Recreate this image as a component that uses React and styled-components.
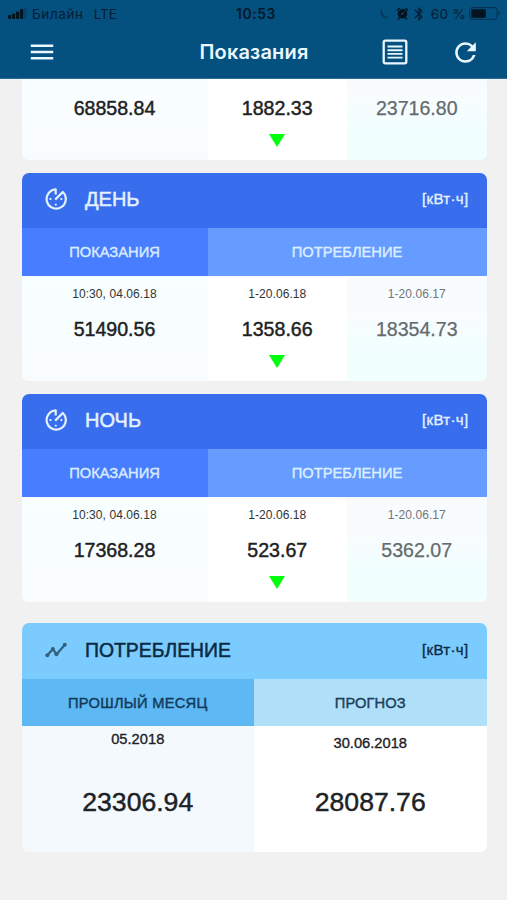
import styled, { createGlobalStyle } from "styled-components";
import { MdMenu, MdRefresh, MdBluetooth } from "react-icons/md";

const GlobalStyle = createGlobalStyle`
    * {
        box-sizing: border-box;
    }

    body {
        margin: 0;
        background-color: #f1f1f1;
        font-family: "Liberation Sans", Arial, sans-serif;
    }
`

const Screen = styled.div`
    height: 900px;
    display: grid;
    grid-template-rows: 79px 1fr;
    overflow: hidden;
    background-color: #f1f1f1;
`

const Header = styled.header`
    display: grid;
    grid-template-rows: 27px 50px;
    background-color: #04507f;
    border-bottom: 1px solid #2c6c94;
    font-family: Inter, sans-serif;
`

const StatusBar = styled.div`
    display: grid;
    grid-template-columns: 1fr auto 1fr;
    align-items: center;
    padding: 0 6px 0 8px;
    color: #061d33;
    font-size: 13.5px;
`

const StatusGroup = styled.div`
    display: flex;
    align-items: center;
    justify-content: ${props => props.$end ? "flex-end" : "flex-start"};

    svg {
        display: block;
        flex: none;
    }
`

const StatusText = styled.span`
    margin-left: ${props => props.$gap || 0}px;
    letter-spacing: ${props => props.$spacing || 0}px;
    white-space: nowrap;
`

const Clock = styled.span`
    padding-left: 3px;
    color: #041829;
    font-size: 13.8px;
    font-weight: 600;
    letter-spacing: 0.6px;
`

const NavBar = styled.div`
    display: grid;
    grid-template-columns: 84px 1fr 57px 84px;
    align-items: center;
    color: #e9f7ff;
`

const IconButton = styled.button`
    display: grid;
    place-content: center;
    padding: 0;
    border: none;
    background: none;
    color: inherit;

    svg {
        display: block;
    }
`

const Title = styled.h1`
    margin: 0;
    padding-left: 58px;
    text-align: center;
    font-size: 20px;
    font-weight: 600;
    letter-spacing: 0.15px;
`

const Content = styled.main`
    overflow: hidden;
    padding: 0 20.5px 0 21.5px;
`

const Card = styled.section`
    margin-top: ${props => props.$top}px;
    border-radius: 7px;
    overflow: hidden;
    background-color: white;
`

const CardHead = styled.div`
    display: grid;
    grid-template-columns: 63.5px 1fr auto;
    align-items: center;
    height: ${props => props.$light ? 56 : 55}px;
    padding: 0 18px 3px 0;
    color: ${props => props.$light ? "#0b2a42" : "#e4f1ff"};
    background-color: ${props => props.$light ? "#7bcbff" : "#386eee"};

    svg {
        display: block;
        margin-left: 22px;
    }
`

const CardTitle = styled.h2`
    margin: 0;
    padding-top: 1px;
    font-size: ${props => props.$size || 20}px;
    font-weight: 400;
    -webkit-text-stroke: 0.5px currentColor;
`

const Unit = styled.span`
    padding-bottom: 1px;
    font-size: 15px;
    letter-spacing: 0.35px;
    -webkit-text-stroke: 0.35px currentColor;
`

const Tabs = styled.div`
    display: grid;
    grid-template-columns: ${props => props.$columns};
    height: ${props => props.$height || 48}px;
`

const Tab = styled.div`
    display: grid;
    place-content: center;
    font-size: 14.7px;
    letter-spacing: ${props => props.$spacing || 0}px;
    color: ${props => props.color};
    background-color: ${props => props.$bg};
    -webkit-text-stroke: 0.4px currentColor;
`

const Body = styled.div`
    display: grid;
    grid-template-columns: 40% 30% 30%;
    height: 105px;
`

const Cell = styled.div`
    display: grid;
    grid-template-rows: 36px 35px 28px;
    align-items: center;
    justify-items: center;
    color: ${props => props.$muted ? "#666a6b" : "#1e2223"};
    background: ${props => props.$bg};
`

const DateText = styled.span`
    font-size: 12px;
    letter-spacing: 0.08px;
    opacity: 0.92;
`

const Value = styled.span`
    font-size: 19.6px;
    -webkit-text-stroke: ${props => props.$muted ? 0.25 : 0.45}px currentColor;
`

const Arrow = styled.i`
    width: 0;
    height: 0;
    border: 8px solid transparent;
    border-top: 13px solid #00ff0c;
    border-bottom: none;
`

const WideBody = styled.div`
    display: grid;
    grid-template-columns: 1fr 1fr;
    height: 126px;
`

const WideCell = styled.div`
    display: flex;
    flex-direction: column;
    align-items: center;
    padding-top: ${props => props.$top}px;
    color: #1d2226;
    background-color: ${props => props.$bg};
`

const Period = styled.span`
    height: ${props => props.$space}px;
    font-size: 14.7px;
    line-height: 18px;
    -webkit-text-stroke: 0.35px currentColor;
`

const Total = styled.span`
    font-size: 26.6px;
    line-height: 30px;
    -webkit-text-stroke: 0.45px currentColor;
`

function SignalIcon() {
    return (
        <svg width="19" height="12" viewBox="0 0 19 12" fill="#03131f">
            <rect x="0" y="7" width="3.2" height="4" rx="1" />
            <rect x="4" y="5.5" width="3.2" height="5.5" rx="1" />
            <rect x="8" y="3.5" width="3.2" height="7.5" rx="1" />
            <rect x="12" y="1" width="3.2" height="10" rx="1" />
            <rect x="16" y="0" width="2.6" height="11" rx="1" opacity="0.2" />
        </svg>
    )
}

function MoonIcon() {
    return (
        <svg width="11" height="12" viewBox="0 0 11 12">
            <path d="M2.5 1.5C.5 5 2 10.5 9.5 9.5C5 9 2.5 6 2.5 1.5Z" fill="#04253f" stroke="#04253f" strokeWidth=".6" opacity=".55" />
        </svg>
    )
}

function AlarmIcon() {
    return (
        <svg width="13" height="13" viewBox="0 0 13 13">
            <circle cx="6.5" cy="6.8" r="4.8" fill="#03131f" />
            <path d="M1.5 3L3.2 1.5M11.5 3L9.8 1.5M3.2 11L2.5 12M9.8 11L10.5 12" stroke="#03131f" strokeWidth="1.4" strokeLinecap="round" />
            <path d="M7.8 5.2L6.5 7H5" fill="none" stroke="#2b6a92" strokeWidth=".8" />
        </svg>
    )
}

function BatteryIcon() {
    return (
        <svg width="32" height="13" viewBox="0 0 32 13">
            <rect x=".6" y=".6" width="27.5" height="11.8" rx="2.8" fill="none" stroke="#04253f" strokeWidth="1" opacity=".75" />
            <rect x="2.3" y="2.2" width="14.5" height="8.6" rx="1" fill="#03131f" />
            <path d="M29.5 4.3C31.3 5 31.3 8 29.5 8.7Z" fill="#04253f" opacity=".75" />
        </svg>
    )
}

function ListIcon() {
    return (
        <svg width="26" height="26" viewBox="0 0 26 26" fill="none" stroke="currentColor">
            <rect x="1.7" y="1.7" width="22.6" height="22.6" rx="1.5" strokeWidth="2.3" />
            <path d="M5.5 7.5H20.5M5.5 11.2H20.5M5.5 14.9H20.5M5.5 18.6H20.5" strokeWidth="1.9" />
        </svg>
    )
}

// tariff meter: open dial with a hand and three ticks
function MeterIcon() {
    return (
        <svg width="24" height="24" viewBox="0 0 24 24" fill="none" stroke="currentColor" strokeWidth="2.2">
            <path d="M11.7 7.5V2.4A9.6 9.6 0 1 0 18.8 5L11.2 12.6" strokeLinejoin="round" />
            <path d="M5.5 12H7.3M16.5 12H18.3M11.8 16.7V18.5" strokeWidth="1.9" />
        </svg>
    )
}

function TrendIcon() {
    return (
        <svg width="24" height="24" viewBox="0 0 24 24" fill="#33607e">
            <path d="M3.3 17.2L8.9 11L12.5 16.4L20.8 6.8" fill="none" stroke="#33607e" strokeWidth="2.3" />
            <circle cx="3.3" cy="17.2" r="2" />
            <circle cx="8.9" cy="11" r="2" />
            <circle cx="12.5" cy="16.2" r="2" />
            <circle cx="20.8" cy="6.8" r="2" />
        </svg>
    )
}

const sideBg = "linear-gradient(180deg, #f8ffff, #f9fcff)"
const prevBg = "linear-gradient(180deg, #f9fcff 35%, #f1ffff 75%)"

function Readings({ dates, values }) {
    return (
        <Body>
            <Cell $bg={sideBg}>
                <DateText>{dates[0]}</DateText>
                <Value>{values[0]}</Value>
            </Cell>
            <Cell $bg="white">
                <DateText>{dates[1]}</DateText>
                <Value>{values[1]}</Value>
                <Arrow />
            </Cell>
            <Cell $bg={prevBg} $muted>
                <DateText>{dates[2]}</DateText>
                <Value $muted>{values[2]}</Value>
            </Cell>
        </Body>
    )
}

function TariffCard({ title, values }) {
    return (
        <Card $top={13}>
            <CardHead>
                <MeterIcon />
                <CardTitle>{title}</CardTitle>
                <Unit>[кВт·ч]</Unit>
            </CardHead>
            <Tabs $columns="40% 60%">
                <Tab color="#d9ecff" $bg="#487dff">ПОКАЗАНИЯ</Tab>
                <Tab color="#dcefff" $bg="#669bff">ПОТРЕБЛЕНИЕ</Tab>
            </Tabs>
            <Readings dates={["10:30, 04.06.18", "1-20.06.18", "1-20.06.17"]} values={values} />
        </Card>
    )
}

function App() {
    return (
        <Screen>
            <GlobalStyle />
            <Header>
                <StatusBar>
                    <StatusGroup>
                        <SignalIcon />
                        <StatusText $gap={5} $spacing={0.6}>Билайн</StatusText>
                        <StatusText $gap={10}>LTE</StatusText>
                    </StatusGroup>
                    <Clock>10:53</Clock>
                    <StatusGroup $end>
                        <MoonIcon />
                        <StatusText $gap={6}><AlarmIcon /></StatusText>
                        <StatusText $gap={2}><MdBluetooth size={16} /></StatusText>
                        <StatusText $gap={4} $spacing={0.35}>60 %</StatusText>
                        <StatusText $gap={3}><BatteryIcon /></StatusText>
                    </StatusGroup>
                </StatusBar>
                <NavBar>
                    <IconButton><MdMenu size={30} /></IconButton>
                    <Title>Показания</Title>
                    <IconButton><ListIcon /></IconButton>
                    <IconButton><MdRefresh size={31} /></IconButton>
                </NavBar>
            </Header>
            <Content>
                <Card $top={-24}>
                    <Readings dates={[]} values={["68858.84", "1882.33", "23716.80"]} />
                </Card>
                <TariffCard title="ДЕНЬ" values={["51490.56", "1358.66", "18354.73"]} />
                <TariffCard title="НОЧЬ" values={["17368.28", "523.67", "5362.07"]} />
                <Card $top={21}>
                    <CardHead $light>
                        <TrendIcon />
                        <CardTitle $size={19.4}>ПОТРЕБЛЕНИЕ</CardTitle>
                        <Unit>[кВт·ч]</Unit>
                    </CardHead>
                    <Tabs $columns="1fr 1fr" $height={47}>
                        <Tab color="#123a58" $bg="#5eb8f3" $spacing={0.25}>ПРОШЛЫЙ МЕСЯЦ</Tab>
                        <Tab color="#1c3e55" $bg="#b0dff9" $spacing={0.1}>ПРОГНОЗ</Tab>
                    </Tabs>
                    <WideBody>
                        <WideCell $bg="#f4f9fd" $top={4}>
                            <Period $space={57}>05.2018</Period>
                            <Total>23306.94</Total>
                        </WideCell>
                        <WideCell $bg="#ffffff" $top={8}>
                            <Period $space={53}>30.06.2018</Period>
                            <Total>28087.76</Total>
                        </WideCell>
                    </WideBody>
                </Card>
            </Content>
        </Screen>
    )
}

export default App
